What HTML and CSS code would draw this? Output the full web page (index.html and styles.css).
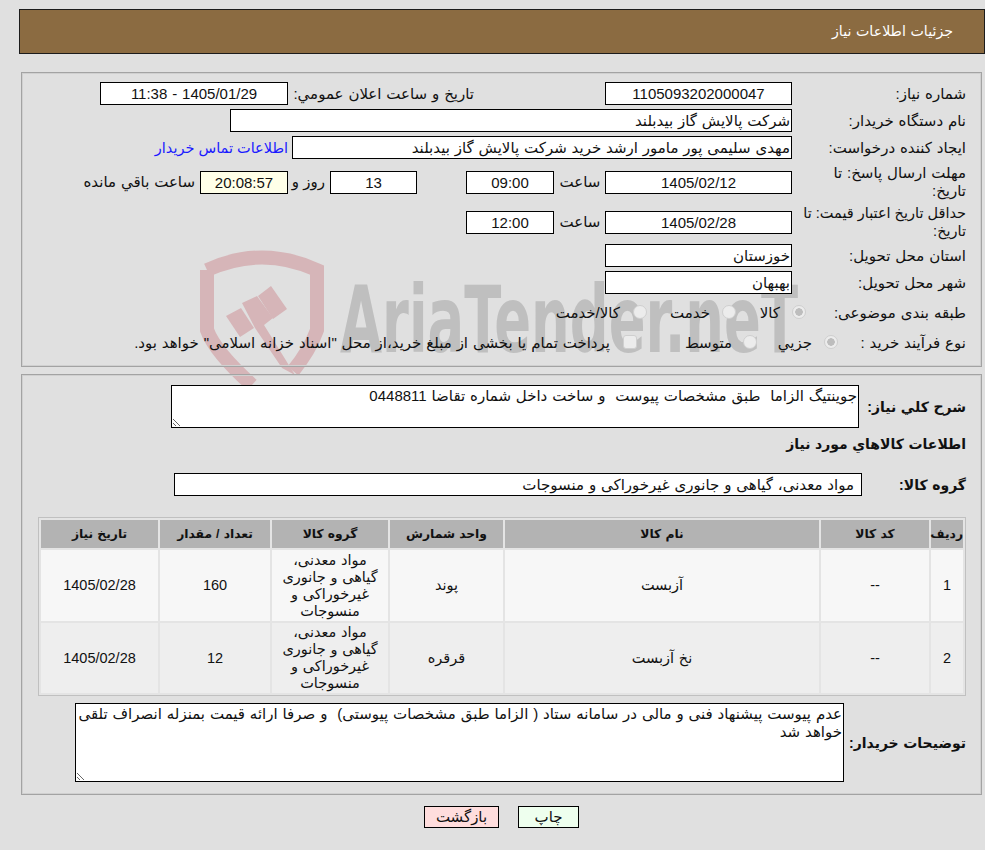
FILE: index.html
```html
<!DOCTYPE html>
<html lang="fa" dir="rtl">
<head>
<meta charset="utf-8">
<title>جزئیات اطلاعات نیاز</title>
<link rel="stylesheet" href="styles.css">
</head>
<body>
<svg class="watermark" width="985" height="400" viewBox="0 0 985 400" aria-hidden="true">
  <g class="wm-shield">
    <path class="wm-line" d="M207 270 Q262 245 317 270 L317 330 Q310 350 293 371"/>
    <path class="wm-line" d="M207 270 L207 330 Q215 352 252 385"/>
    <polygon points="226,316 241,308 254,328 240,337"/>
    <polygon points="242,303 257,296 273,318 264,325 295,375 282,368 255,328"/>
    <polygon points="258,296 271,286 287,309 273,319"/>
  </g>
  <text class="wm-text" x="340" y="352" textLength="458" lengthAdjust="spacingAndGlyphs">AriaTender.neT</text>
</svg>

<header class="title-bar">جزئیات اطلاعات نیاز</header>

<section class="panel panel-top">
  <div class="row">
    <label class="lbl">شماره نیاز:</label>
    <input class="box date num" readonly value="1105093202000047">
    <span class="pub-label">تاریخ و ساعت اعلان عمومي:</span>
    <input class="box date pub num" readonly value="1405/01/29 - 11:38">
  </div>
  <div class="row">
    <label class="lbl">نام دستگاه خریدار:</label>
    <input class="box buyer" readonly value="شرکت پالایش گاز بیدبلند">
  </div>
  <div class="row">
    <label class="lbl">ایجاد کننده درخواست:</label>
    <input class="box creator" readonly value="مهدی سلیمی پور مامور ارشد خرید شرکت پالایش گاز بیدبلند">
    <a class="contact" href="#">اطلاعات تماس خریدار</a>
  </div>
  <div class="row row-tall row-gap">
    <label class="lbl lbl-two">مهلت ارسال پاسخ: تا<br>تاریخ:</label>
    <input class="box date num" readonly value="1405/02/12">
    <span class="hour">ساعت</span>
    <input class="box time num" readonly value="09:00">
    <input class="box days num" readonly value="13">
    <span class="day-word">روز و</span>
    <input class="box time timer num" readonly value="20:08:57">
    <span class="left-word">ساعت باقي مانده</span>
  </div>
  <div class="row row-tall">
    <label class="lbl lbl-two lbl-tight">حداقل تاریخ اعتبار قیمت: تا<br>تاریخ:</label>
    <input class="box date num" readonly value="1405/02/28">
    <span class="hour">ساعت</span>
    <input class="box time num" readonly value="12:00">
  </div>
  <div class="row">
    <label class="lbl">استان محل تحویل:</label>
    <input class="box date" readonly value="خوزستان">
  </div>
  <div class="row">
    <label class="lbl">شهر محل تحویل:</label>
    <input class="box date" readonly value="بهبهان">
  </div>
  <div class="row row-opt row-opt-first">
    <label class="lbl">طبقه بندی موضوعی:</label>
    <input class="opt opt-a" type="radio" name="cat" disabled checked>
    <span class="opt-text t-kala">کالا</span>
    <input class="opt opt-b" type="radio" name="cat" disabled>
    <span class="opt-text t-khedmat">خدمت</span>
    <input class="opt opt-c" type="radio" name="cat" disabled>
    <span class="opt-text t-both">کالا/خدمت</span>
  </div>
  <div class="row row-opt">
    <label class="lbl">نوع فرآیند خرید :</label>
    <input class="opt opt-d" type="radio" name="proc" disabled checked>
    <span class="opt-text t-jozi">جزیي</span>
    <input class="opt opt-e" type="radio" name="proc" disabled>
    <span class="opt-text t-mid">متوسط</span>
    <input class="opt opt-f" type="checkbox" disabled>
    <span class="opt-text t-pay">پرداخت تمام یا بخشی از مبلغ خرید،از محل "اسناد خزانه اسلامی" خواهد بود.</span>
  </div>
</section>

<section class="panel panel-bottom">
  <div class="row desc-row">
    <label class="lbl-b">شرح کلي نیاز:</label>
    <textarea class="area desc" readonly>جوینتیگ الزاما  طبق مشخصات پیوست  و ساخت داخل شماره تقاضا 0448811</textarea>
  </div>
  <h2 class="sub">اطلاعات کالاهاي مورد نیاز</h2>
  <div class="row group-row">
    <label class="lbl-b lbl-group">گروه کالا:</label>
    <input class="box group" readonly value="مواد معدنی، گیاهی و جانوری غیرخوراکی و منسوجات">
  </div>
  <table class="goods">
    <colgroup>
      <col class="c1"><col class="c2"><col class="c3"><col class="c4"><col class="c5"><col class="c6"><col class="c7">
    </colgroup>
    <thead>
      <tr><th>ردیف</th><th>کد کالا</th><th>نام کالا</th><th>واحد شمارش</th><th>گروه کالا</th><th>تعداد / مقدار</th><th>تاریخ نیاز</th></tr>
    </thead>
    <tbody>
      <tr><td>1</td><td>--</td><td>آزبست</td><td>پوند</td><td>مواد معدنی، گیاهی و جانوری غیرخوراکی و منسوجات</td><td>160</td><td>1405/02/28</td></tr>
      <tr><td>2</td><td>--</td><td>نخ آزبست</td><td>قرقره</td><td>مواد معدنی، گیاهی و جانوری غیرخوراکی و منسوجات</td><td>12</td><td>1405/02/28</td></tr>
    </tbody>
  </table>
  <div class="row notes-row">
    <label class="lbl-b lbl-notes">توضیحات خریدار:</label>
    <textarea class="area notes" readonly>عدم پیوست پیشنهاد فنی و مالی در سامانه ستاد ( الزاما طبق مشخصات پیوستی)  و صرفا ارائه قیمت بمنزله انصراف تلقی خواهد شد</textarea>
  </div>
</section>

<div class="actions">
  <button class="btn print" type="button">چاپ</button>
  <button class="btn back" type="button">بازگشت</button>
</div>
</body>
</html>
```
FILE: styles.css
```css
html, body { margin: 0; padding: 0; }
html { background: #e0e0e0; }
body {
  position: relative;
  width: 985px;
  height: 850px;
  overflow: hidden;
  font-family: "Liberation Sans", "DejaVu Sans", sans-serif;
  font-size: 15px;
  line-height: 18px;
  word-spacing: 0.7px;
  color: #111;
}
.watermark { position: absolute; left: 0; top: 0; direction: ltr; }
.wm-shield { fill: #d6b5b8; }
.wm-line { fill: none; stroke: #d6b5b8; stroke-width: 14; }
.wm-text { font: bold 92px "DejaVu Sans", sans-serif; fill: #bfbfbf; direction: ltr; word-spacing: 0; }

.title-bar {
  position: relative;
  box-sizing: border-box;
  height: 45px;
  margin: 9px 0 0 19px;
  width: 966px;
  padding: 0 31px;
  background: #8b6b41;
  border: 1px solid #1c1c1c;
  color: #fff;
  line-height: 43px;
  font-size: 14.2px;
}
.panel {
  position: relative;
  box-sizing: border-box;
  width: 961px;
  margin: 0 3px 0 0;
  border: 1px solid #a3a3a3;
  box-shadow: inset 0 0 0 1px #d0d0d0;
  padding-right: 15px;
}
.panel-top { margin-top: 18px; height: 295px; padding-top: 9px; }
.panel-bottom { margin-top: 7px; height: 421px; padding-top: 10px; }

.row { display: flex; align-items: center; margin-bottom: 4px; min-height: 23px; }
.row-tall { min-height: 36px; }
.row-gap { margin-top: 5px; }
.row-opt { min-height: 20px; margin-bottom: 10px; }
.row-opt-first { margin-top: 8px; }

.lbl { width: 167px; flex: none; margin-left: 7px; }
.lbl-two { white-space: nowrap; }
.lbl-tight { font-size: 14.5px; word-spacing: 0; }
.lbl-b { font-weight: bold; font-size: 14px; flex: none; }

.box {
  box-sizing: border-box;
  flex: none;
  height: 23px;
  padding: 0 1px;
  border: 1px solid #000;
  background: #fff;
  color: #111;
  font: 15px "Liberation Sans", "DejaVu Sans", sans-serif;
  word-spacing: 0.7px;
  direction: rtl;
  outline: none;
}
.date { width: 187px; }
.date.num, .time, .days { text-align: center; }
.pub-label { margin-right: 131px; width: 181px; flex: none; white-space: nowrap; }
.pub { width: 188px; margin-right: 5px; }
.buyer { width: 562px; }
.creator { width: 500px; }
.contact { margin-right: 4px; color: #1a1aff; text-decoration: none; white-space: nowrap; font-size: 14.5px; word-spacing: 0; }
.hour { width: 42px; margin: 0 4px 0 5px; flex: none; text-align: center; }
.time { width: 88px; }
.days { width: 87px; margin-right: 49px; }
.day-word { margin: 0 5px 0 9px; width: 28px; flex: none; white-space: nowrap; word-spacing: 0; }
.timer { background: #ffffe8; }
.left-word { margin-right: 5px; white-space: nowrap; }

.opt {
  appearance: none;
  flex: none;
  box-sizing: border-box;
  width: 14px;
  height: 14px;
  margin: 0;
  border: 1px solid #cfcfcf;
  border-radius: 50%;
  background: #ececec;
}
.opt:checked { background: radial-gradient(circle, #bdbdbd 0 3.5px, #ececec 4px); }
input[type="checkbox"].opt { border-radius: 3px; }
.opt-text { white-space: nowrap; flex: none; padding-top: 2px; }
.row-opt .lbl { padding-top: 2px; }
.opt-a { margin-right: -14px; }
.t-kala { margin-right: 12px; width: 20px; }
.opt-b { margin-right: 24px; }
.t-khedmat { margin-right: 12px; width: 40px; }
.opt-c { margin-right: 23px; }
.t-both { margin-right: 13px; }
.opt-d { margin-right: -46px; }
.t-jozi { margin-right: 12px; width: 34px; }
.opt-e { margin-right: 21px; }
.t-mid { margin-right: 11px; width: 45px; }
.opt-f { margin-right: 50px; }
.t-pay { margin-right: 13px; }

.desc-row { margin-bottom: 0; }
.desc-row .lbl-b { width: 107px; }
.area {
  box-sizing: border-box;
  flex: none;
  border: 1px solid #000;
  background: #fff;
  color: #111;
  font: 15px/18px "Liberation Sans", "DejaVu Sans", sans-serif;
  word-spacing: 0.7px;
  padding: 1px;
  margin: 0;
  outline: none;
  display: block;
}
.desc { width: 688px; height: 43px; }
.sub { margin: 7px 0 0; font-size: 14px; line-height: 18px; font-weight: bold; }
.group-row { margin: 20px 0 0; }
.lbl-group { width: 104px; }
.group { width: 688px; padding-right: 7px; }
.goods {
  width: 928px;
  margin-top: 21px;
  table-layout: fixed;
  background: #e4e4e4;
  border: 1px solid #c0c0c0;
  border-spacing: 2px;
  border-collapse: separate;
}
.c1 { width: 32px; } .c2 { width: 108px; } .c3 { width: 314px; } .c4 { width: 113px; }
.c5 { width: 116px; } .c6 { width: 110px; } .c7 { width: 117px; }
.goods th { height: 28px; padding: 0; background: #b3b3b3; font-size: 12.3px; font-weight: bold; }
.goods td { height: 71px; padding: 0 4px; text-align: center; line-height: 17px; background: #f7f7f7; font-size: 14.5px; }
.goods tbody tr + tr td { background: #eee; height: 70px; }
.notes-row { margin: 7px 0 0; }
.lbl-notes { width: 122px; }
.notes { width: 769px; height: 79px; }

.actions { position: relative; display: flex; justify-content: center; gap: 19px; margin: 11px 0 0; padding-left: 18px; }
.btn {
  box-sizing: border-box;
  height: 22px;
  border: 1px solid #000;
  font: 15px "Liberation Sans", "DejaVu Sans", sans-serif;
  color: #111;
  padding: 0;
}
.print { width: 61px; background: #eeffee; }
.back { width: 75px; background: #ffdddd; }
```
